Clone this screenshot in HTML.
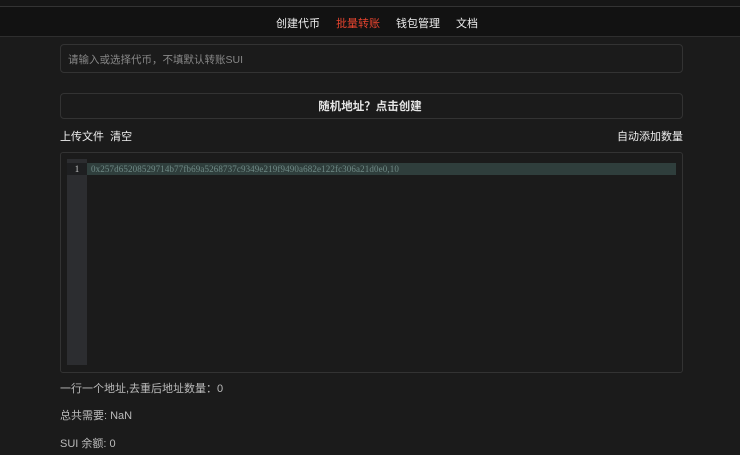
<!DOCTYPE html>
<html><head><meta charset="utf-8"><style>
*{margin:0;padding:0;box-sizing:border-box}
body{width:740px;height:455px;background:#1b1b1b;font-family:"Liberation Sans","Noto Sans CJK SC",sans-serif;color:#ddd;position:relative;overflow:hidden}
.abs{position:absolute}
.topbar{left:0;top:0;width:740px;height:7px;background:#161616;border-bottom:1px solid #333}
.nav{left:0;top:7px;width:740px;height:30px;background:#121212;border-bottom:1px solid #2e2e2e;font-size:11px;color:#eee}
.nav span{position:absolute;top:8px}
.box{border:1px solid #333;border-radius:4px;background:#1b1b1b}
</style></head><body>
<div class="abs topbar"></div>
<div class="abs nav"><span style="left:276px">创建代币</span><span style="left:336px;color:#e8442f">批量转账</span><span style="left:396px">钱包管理</span><span style="left:456px">文档</span></div>
<div class="abs box" style="left:60px;top:44px;width:623px;height:29px"></div>
<div class="abs" style="left:68px;top:52px;font-size:10.5px;color:#888">请输入或选择代币，不填默认转账SUI</div>
<div class="abs box" style="left:60px;top:93px;width:623px;height:26px"></div>
<div class="abs" style="left:0;width:740px;top:98px;text-align:center;font-size:11.5px;font-weight:bold;color:#e5e5e5">随机地址？点击创建</div>
<div class="abs" style="left:60px;top:128px;font-size:11px;color:#eee">上传文件&nbsp;&nbsp;清空</div>
<div class="abs" style="left:617px;top:128px;font-size:11px;color:#eee">自动添加数量</div>
<div class="abs box" style="left:60px;top:152px;width:623px;height:221px;border-radius:3px"></div>
<div class="abs" style="left:67px;top:159px;width:20px;height:206px;background:#2c2d30"></div>
<div class="abs" style="left:67px;top:163px;width:20px;height:12px;background:#1e1f21;color:#ccc;font-size:9px;text-align:center;line-height:12px;font-family:'Liberation Serif',serif">1</div>
<div class="abs" style="left:87px;top:163px;width:589px;height:12px;background:#2f3e3c;color:#6f8a86;font-size:9px;line-height:12px;padding-left:4px;letter-spacing:0.12px;font-family:'Liberation Serif',serif">0x257d65208529714b77fb69a5268737c9349e219f9490a682e122fc306a21d0e0,10</div>
<div class="abs" style="left:60px;top:380px;font-size:11px;color:#bbb">一行一个地址,去重后地址数量：0</div>
<div class="abs" style="left:60px;top:407px;font-size:11px;color:#bbb">总共需要: NaN</div>
<div class="abs" style="left:60px;top:435px;font-size:11px;color:#bbb">SUI 余额: 0</div>
</body></html>
